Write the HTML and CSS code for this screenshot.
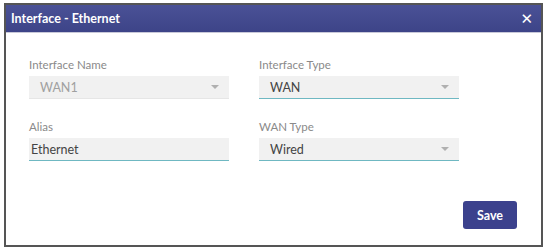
FILE: index.html
```html
<!DOCTYPE html>
<html>

<head>
    <meta charset="utf-8">
    <title>Interface - Ethernet</title>
    <link rel="stylesheet" href="styles.css">
</head>

<body>
    <div class="dialog">
        <div class="dialog-header">
            <div class="dialog-title">Interface - Ethernet</div>
            <button class="close-button" title="Close">✕</button>
        </div>

        <div class="dialog-body">
            <div class="form-grid">
                <div class="form-group">
                    <div class="form-label">Interface Name</div>
                    <div class="select disabled">
                        <span>WAN1</span>
                        <span class="caret"></span>
                    </div>
                </div>
                <div class="form-group">
                    <div class="form-label">Interface Type</div>
                    <div class="select">
                        <span>WAN</span>
                        <span class="caret"></span>
                    </div>
                </div>
                <div class="form-group">
                    <div class="form-label">Alias</div>
                    <div class="input">Ethernet</div>
                </div>
                <div class="form-group">
                    <div class="form-label">WAN Type</div>
                    <div class="select">
                        <span>Wired</span>
                        <span class="caret"></span>
                    </div>
                </div>
            </div>

            <div class="actions">
                <button class="button">Save</button>
            </div>
        </div>
    </div>
</body>

</html>
```

FILE: styles.css
```css
body {
    margin: 0;
    padding: 3px 3px 4px 4px;
    background: #fff;
    font-family: Lato, 'Open Sans', sans-serif;
}

.dialog {
    height: 240px;
    border: 2px solid #555;
    background: white;
    display: flex;
    flex-direction: column;
}

.dialog-header {
    height: 27px;
    background: linear-gradient(#4a5196, #3d4488);
    display: flex;
    align-items: center;
    justify-content: space-between;
    padding: 0 8px 0 5px;
    border-bottom: 1px solid #c8c8d8;
}

.dialog-title {
    color: white;
    font-size: 12.5px;
    font-weight: 700;
}

.close-button {
    background: none;
    border: none;
    color: white;
    font-size: 15px;
    padding: 0;
    cursor: pointer;
    font-family: 'DejaVu Sans', sans-serif;
}

.dialog-body {
    padding: 25px 24px 0 23px;
    flex: 1;
    display: flex;
    flex-direction: column;
}

.form-grid {
    display: grid;
    grid-template-columns: 200px 200px;
    column-gap: 30px;
    row-gap: 21px;
}

.form-label {
    font-size: 11.5px;
    color: #8a8a8a;
    margin-bottom: 5px;
}

.select,
.input {
    height: 22px;
    background: #f1f1f1;
    border-bottom: 1px solid #6fb8c2;
    display: flex;
    align-items: center;
    justify-content: space-between;
    padding: 0 10px 0 8px;
    font-size: 12.5px;
    color: #444;
}

.select span:first-child {
    padding-left: 3px;
}

.select.disabled {
    border-bottom-color: #e6e6e6;
    color: #a0a0a0;
}

.input {
    padding-left: 2px;
}

.caret {
    width: 0;
    height: 0;
    border-left: 4px solid transparent;
    border-right: 4px solid transparent;
    border-top: 4px solid #b0b0b0;
}

.actions {
    display: flex;
    justify-content: flex-end;
    margin-top: 40px;
}

.button {
    width: 54px;
    height: 28px;
    background: #3b418d;
    color: white;
    border: none;
    border-radius: 3px;
    font-family: Lato, sans-serif;
    font-size: 12.5px;
    font-weight: 700;
    cursor: pointer;
}
```
